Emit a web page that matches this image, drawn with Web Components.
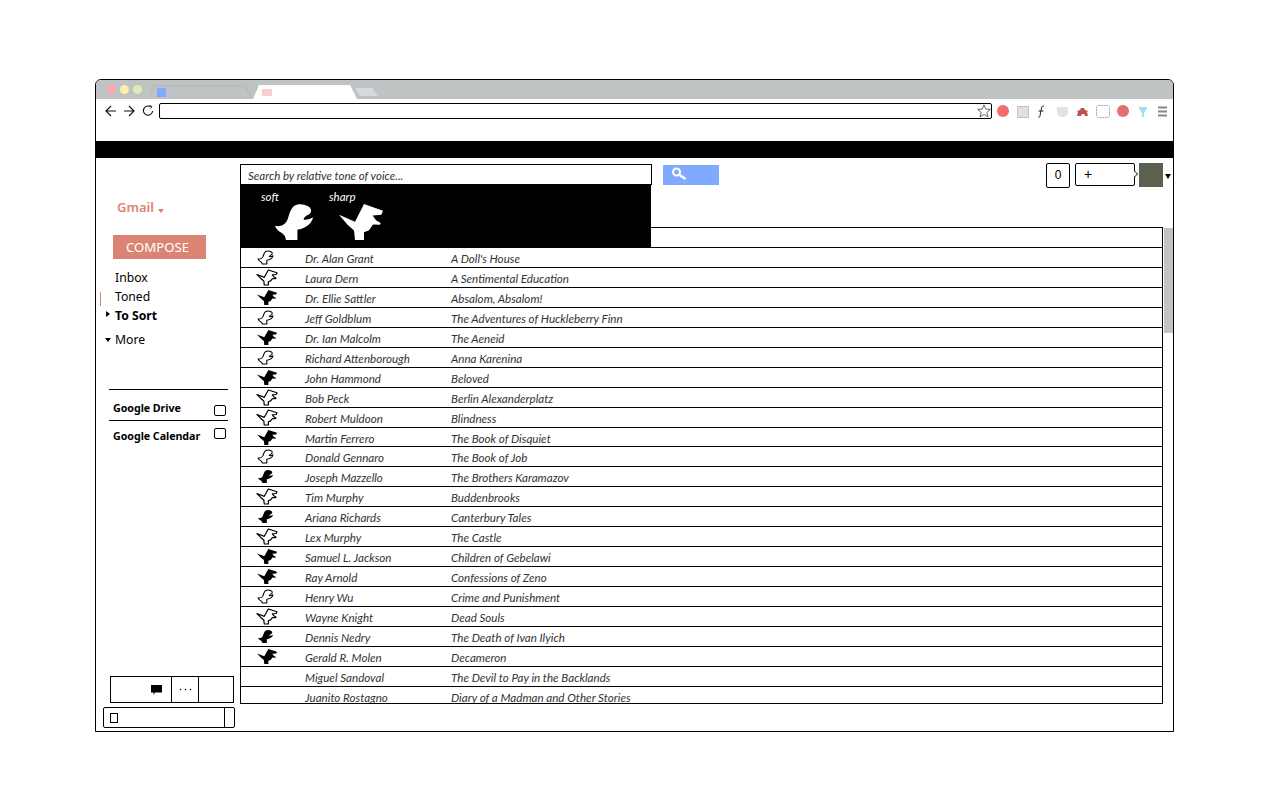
<!DOCTYPE html>
<html>
<head>
<meta charset="utf-8">
<title>Gmail</title>
<style>
  html, body { margin: 0; background: #fff; }
  body { padding: 79px 0 0 95px; font-family: "Open Sans", "Noto Sans", sans-serif; }
</style>
</head>
<body>
<browser-window>
  <gmail-sidebar slot="side"></gmail-sidebar>
  <mail-list slot="main"></mail-list>
</browser-window>

<script>
(function() {
    // traced from the big icons, coordinates are 3x the pixels on screen
    const DINOS = {
        sharp: {
            box: '210 18 132 106',
            d: 'M210 50 L258 70 L285 18 L342 38 L337 50 L311 52 L321 66 L335 74 L333 79 L312 78 L300 95 L285 101 L285 124 L258 124 L255 96 L235 78 Z'
        },
        soft: {
            box: '20 18 112 106',
            d: 'M20 82 C32 86 48 82 56 66 C62 52 64 34 76 24 C88 15 108 18 120 26 C130 34 128 44 118 50 C110 54 106 58 104 64 C112 66 124 62 132 57 C130 72 116 88 86 94 L86 124 L52 124 C52 112 44 106 34 100 C28 96 23 90 20 82 Z'
        }
    };

    class DinoIcon extends HTMLElement {
        connectedCallback() {
            const dino = DINOS[this.getAttribute('kind')] || DINOS.sharp;
            const look = this.getAttribute('look') || 'solid';
            const fill = look === 'line' ? '#fff' : 'currentColor';
            const sw = look === 'line' ? 8 : 0;
            const root = this.attachShadow({ mode: 'open' });
            root.innerHTML = `
                <style>
                  :host { display: block; color: #000; line-height: 0; }
                  svg { display: block; width: 100%; height: 100%; overflow: visible; }
                </style>
                <svg viewBox="${dino.box}" preserveAspectRatio="none"><path d="${dino.d}" fill="${fill}" stroke="currentColor" stroke-width="${sw}" stroke-linejoin="round"/></svg>
            `;
        }
    }
    customElements.define('dino-icon', DinoIcon);

    class BrowserWindow extends HTMLElement {
        constructor() {
            super();
            const root = this.attachShadow({ mode: 'open' });
            root.innerHTML = `
                <style>
                  :host { display: flex; flex-direction: column; box-sizing: border-box; width: 1079px; height: 653px;
                          border: 1px solid #000; border-radius: 6px 6px 0 0; overflow: hidden; }
                  .tabs { height: 19px; box-sizing: border-box; padding-top: 1px; background: #bfc3c3; display: flex; align-items: flex-start; flex: none; position: relative; }
                  .dots { display: flex; gap: 4px; padding: 4px 0 0 11px; width: 39px; }
                  .dots i { width: 9px; height: 9px; border-radius: 50%; flex: none; }
                  .tab { position: relative; flex: none; }
                  .t1 { width: 105px; height: 14px; margin: 4px 0 0 2px; background: #b5b9b9; clip-path: polygon(6px 0, 97px 0, 105px 100%, 0 100%); }
                  .t1:before { content: ""; position: absolute; inset: 1px 1px 0 1px; background: #bfc3c3; clip-path: polygon(6px 0, 95px 0, 103px 100%, 0 100%); }
                  .t1 b { position: absolute; left: 9px; top: 3px; width: 9px; height: 9px; background: #80aaff; }
                  .t2 { width: 104px; height: 14px; margin-top: 4px; background: #fff; clip-path: polygon(6px 0, 97px 0, 104px 100%, 0 100%); }
                  .t2 b { position: absolute; left: 9px; top: 4px; width: 10px; height: 7px; background: #f9cdd0; }
                  .t3 { width: 23px; height: 8px; margin: 7px 0 0 -2px; background: #d7dadc; clip-path: polygon(0 0, 17px 0, 23px 100%, 5px 100%); }
                  .toolbar { height: 42px; flex: none; display: flex; align-items: flex-start; padding: 4px 0 0 9px; box-sizing: border-box; }
                  .nav { display: flex; gap: 6px; align-items: center; height: 16px; margin-right: 5px; }
                  .nav svg { display: block; }
                  .nav svg:last-child { margin-left: 1px; }
                  .addr { box-sizing: border-box; width: 834px; height: 16px; border: 1px solid #000; border-radius: 2px; position: relative; }
                  .addr svg { position: absolute; right: 0; top: 0; }
                  .ext { display: flex; align-items: center; height: 16px; margin-left: 1px; }
                  .black { height: 17px; background: #000; flex: none; }
                  .body { flex: 1; display: flex; min-height: 0; }
                  ::slotted([slot=side]) { width: 144px; flex: none; }
                  ::slotted([slot=main]) { flex: 1; min-width: 0; }
                </style>
                <div class="tabs">
                  <div class="dots"><i style="background:#fda8ad"></i><i style="background:#fdf0a8"></i><i style="background:#d8f0b8"></i></div>
                  <div class="tab t1"><b></b></div>
                  <div class="tab t2"><b></b></div>
                  <div class="tab t3"></div>
                </div>
                <div class="toolbar">
                  <div class="nav">
                    <svg width="12" height="12" viewBox="0 0 12 12" fill="none" stroke="#111" stroke-width="1.1"><path d="M11 6H1M6 1L1 6l5 5"/></svg>
                    <svg width="12" height="12" viewBox="0 0 12 12" fill="none" stroke="#111" stroke-width="1.1"><path d="M1 6h10M6 1l5 5-5 5"/></svg>
                    <svg width="12" height="12" viewBox="0 0 12 12" fill="none" stroke="#111" stroke-width="1.1"><path d="M8.500 1.700A4.600 4.600 0 1 0 10.600 6"/><path d="M7.500 .500l2.500 1-1.500 2" stroke-width=".9"/></svg>
                  </div>
                  <div class="addr">
                    <svg width="14" height="14" viewBox="0 0 14 14" fill="#fff" stroke="#444" stroke-width=".8"><path d="M7 .8l1.8 4.3 4.6.3-3.6 3 1.2 4.5L7 10.4l-4 2.5 1.2-4.5-3.600-3 4.600-.3z"/></svg>
                  </div>
                  <div class="ext">
                    <svg width="180" height="16" viewBox="0 0 180 16">
                      <circle cx="10" cy="8" r="6" fill="#f26c6c"/>
                      <rect x="24.500" y="3.500" width="11" height="11" fill="#e0e0e0" stroke="#c4c4c4"/>
                      <path d="M45 14c2 1 2-1 2.500-4l1-5c.5-2 1.500-2.500 2.500-1.500M45.500 8h5" fill="none" stroke="#222" stroke-width="1"/>
                      <path d="M64 4h11v5c0 3-3 5-5.500 5S64 12 64 9z" fill="#e2e2e2"/>
                      <path d="M84 13l1-4-1-1 3-1 1-2h3l1 2 3 1-1 1 1 4h-3l-1-2h-2l-1 2z" fill="#c0504d"/>
                      <rect x="103.500" y="2.500" width="13" height="12" rx="2" fill="#fff" stroke="#aaa" stroke-dasharray="2 .6"/>
                      <circle cx="130" cy="8" r="6" fill="#e36f6f"/>
                      <path d="M146 4h8c0 2-1.500 4-3 6v4h-2v-4c-1.500-2-3-4-3-6z" fill="#a6dcf8"/>
                      <path d="M165 3.500h9v2h-9zM165 7.500h9v2h-9zM165 11.500h9v2h-9z" fill="#888"/>
                    </svg>
                  </div>
                </div>
                <div class="black"></div>
                <div class="body"><slot name="side"></slot><slot name="main"></slot></div>
            `;
        }
    }
    customElements.define('browser-window', BrowserWindow);

    class GmailSidebar extends HTMLElement {
        constructor() {
            super();
            const root = this.attachShadow({ mode: 'open' });
            root.innerHTML = `
                <style>
                  :host { display: flex; flex-direction: column; color: #000; font-family: "Noto Sans", sans-serif; position: relative; }
                  .gm { margin: 39px 0 0 21px; height: 20px; font-size: 13px; font-weight: 600; color: #dc8474; line-height: 20px; }
                  .gm i { display: inline-block; border: 3.500px solid transparent; border-top: 4px solid #dc8474; border-bottom: 0; margin-left: 1px; vertical-align: -1px; }
                  .compose { box-sizing: border-box; margin: 18px 0 0 17px; width: 93px; height: 24px; padding-right: 4px; background: #dc8474; color: #fff; font-size: 13.200px; line-height: 24px; text-align: center; }
                  .nav { margin: 9px 0 0 19px; font-size: 12.200px; line-height: 19px; position: relative; }
                  .nav div { height: 19px; }
                  .bar { position: absolute; left: -15px; top: 24px; width: 1px; height: 14px; background: #dc8474; }
                  .tri { position: absolute; border-style: solid; border-color: transparent; }
                  .r { left: -9px; top: 43px; border-width: 3.500px 0 3.500px 4px; border-left-color: #000; }
                  .d { left: -10px; top: 70px; border-width: 4px 3.500px 0; border-top-color: #000; }
                  .more { margin-top: 5px; }
                  .apps { margin: 40px 0 0 13px; width: 119px; }
                  .app { box-sizing: border-box; border-top: 1px solid #000; height: 31px; display: flex; justify-content: space-between; padding: 11px 2px 0 4px; font-size: 10.700px; font-weight: 700; line-height: 15px; white-space: nowrap; letter-spacing: -.05px; }
                  .app + .app { height: 28px; padding-top: 8px; }
                  .app span { box-sizing: border-box; flex: none; width: 12px; height: 11px; margin-top: 4px; border: 1px solid #000; border-radius: 2px; }
                  .app + .app span { margin-top: -1px; }
                  .foot { margin: auto 0 0 0; display: flex; flex-direction: column; padding-bottom: 3px; }
                  .chat { box-sizing: border-box; margin-left: 14px; width: 124px; height: 27px; border: 1px solid #000; display: grid; grid-template-columns: 60px 27px 1fr; }
                  .chat > div { display: flex; align-items: center; justify-content: flex-end; box-sizing: border-box; }
                  .chat > div + div { border-left: 1px solid #000; justify-content: center; }
                  .chat svg.bub { margin-right: 9px; }
                  .hang { box-sizing: border-box; margin: 4px 0 0 7px; width: 132px; height: 21px; border: 1px solid #000; border-radius: 2px; display: flex; align-items: center; padding-left: 6px; position: relative; }
                  .hang b { box-sizing: border-box; width: 8px; height: 10px; border: 1px solid #000; }
                  .hang u { position: absolute; right: 9px; top: 0; bottom: 0; width: 1px; background: #000; }
                </style>
                <div class="gm">Gmail <i></i></div>
                <div class="compose">COMPOSE</div>
                <div class="nav">
                  <div>Inbox</div>
                  <div>Toned</div>
                  <div style="font-weight:700">To Sort</div>
                  <div class="more">More</div>
                  <i class="bar"></i><i class="tri r"></i><i class="tri d"></i>
                </div>
                <div class="apps">
                  <div class="app">Google Drive<span></span></div>
                  <div class="app">Google Calendar<span></span></div>
                </div>
                <div class="foot">
                  <div class="chat">
                    <div><svg class="bub" width="11" height="10" viewBox="0 0 11 10"><path d="M0 0h11v7.500H4L2.500 10V7.500H0z" fill="#000"/></svg></div>
                    <div><svg width="13" height="3" viewBox="0 0 13 3" fill="#000"><circle cx="1.500" cy="1.500" r=".8"/><circle cx="6.500" cy="1.500" r=".8"/><circle cx="11.500" cy="1.500" r=".8"/></svg></div>
                    <div></div>
                  </div>
                  <div class="hang"><b></b><u></u></div>
                </div>
            `;
        }
    }
    customElements.define('gmail-sidebar', GmailSidebar);

    const mails = [
        ['soft','line','Dr. Alan Grant',"A Doll's House"],
        ['sharp','line','Laura Dern','A Sentimental Education'],
        ['sharp','solid','Dr. Ellie Sattler','Absalom, Absalom!'],
        ['soft','line','Jeff Goldblum','The Adventures of Huckleberry Finn'],
        ['sharp','solid','Dr. Ian Malcolm','The Aeneid'],
        ['soft','line','Richard Attenborough','Anna Karenina'],
        ['sharp','solid','John Hammond','Beloved'],
        ['sharp','line','Bob Peck','Berlin Alexanderplatz'],
        ['sharp','line','Robert Muldoon','Blindness'],
        ['sharp','solid','Martin Ferrero','The Book of Disquiet'],
        ['soft','line','Donald Gennaro','The Book of Job'],
        ['soft','solid','Joseph Mazzello','The Brothers Karamazov'],
        ['sharp','line','Tim Murphy','Buddenbrooks'],
        ['soft','solid','Ariana Richards','Canterbury Tales'],
        ['sharp','line','Lex Murphy','The Castle'],
        ['sharp','solid','Samuel L. Jackson','Children of Gebelawi'],
        ['sharp','solid','Ray Arnold','Confessions of Zeno'],
        ['soft','line','Henry Wu','Crime and Punishment'],
        ['sharp','line','Wayne Knight','Dead Souls'],
        ['soft','solid','Dennis Nedry','The Death of Ivan Ilyich'],
        ['sharp','solid','Gerald R. Molen','Decameron'],
        ['','','Miguel Sandoval','The Devil to Pay in the Backlands'],
        ['','','Juanito Rostagno','Diary of a Madman and Other Stories']
    ];

    class MailRow extends HTMLElement {
        connectedCallback() {
            const kind = this.getAttribute('kind');
            const root = this.attachShadow({ mode: 'open' });
            root.innerHTML = `
                <style>
                  :host { display: grid; grid-template-columns: 64px 146px 1fr; box-sizing: border-box; height: 19.930px;
                          border-bottom: 1px solid #000; font: italic 11.600px/19px Lato, "Noto Sans", sans-serif; color: #333; white-space: nowrap; }
                  .ic { padding-top: 2px; display: flex; justify-content: center; width: 52px; }
                  .ic .soft { width: 15px; height: 13px; margin: 1px 3px 0 0; }
                  .ic .sharp { width: 20px; height: 15px; }
                  span { padding-top: 1px; }
                </style>
                <div class="ic">${kind ? `<dino-icon class="${kind}" kind="${kind}" look="${this.getAttribute('look')}"></dino-icon>` : ''}</div>
                <span><slot name="from"></slot></span>
                <span><slot name="subject"></slot></span>
            `;
        }
    }
    customElements.define('mail-row', MailRow);

    class MailList extends HTMLElement {
        constructor() {
            super();
            const root = this.attachShadow({ mode: 'open' });
            root.innerHTML = `
                <style>
                  :host { display: flex; flex-direction: column; position: relative; min-height: 0; font-family: Lato, "Noto Sans", sans-serif; }
                  .top { height: 69px; flex: none; display: flex; align-items: flex-start; padding-top: 6px; box-sizing: border-box; }
                  .search { box-sizing: border-box; width: 412px; height: 21px; border: 1px solid #000; font: italic 11.500px/21px Lato, "Noto Sans", sans-serif; color: #333; padding-left: 7px; }
                  .go { width: 56px; height: 20px; background: #80aaff; margin: 1px 0 0 11px; }
                  .go svg { display: block; margin: 2px 0 0 8px; }
                  .right { margin: -1px 0 0 auto; display: flex; align-items: flex-start; padding-right: 2px; }
                  .cnt { box-sizing: border-box; width: 24px; height: 25px; border: 1px solid #000; border-radius: 2px; font: 12px/23px "Liberation Sans", sans-serif; text-align: center; color: #000; }
                  .plus { box-sizing: border-box; width: 60px; height: 23px; margin-left: 5px; border: 1px solid #000; border-radius: 2px; font: 14px/20px "Liberation Sans", sans-serif; padding-left: 8px; color: #000; position: relative; }
                  .plus:after { content: ""; position: absolute; right: -4px; top: 7px; width: 5px; height: 5px; background: #fff; border: solid #000; border-width: 1px 1px 0 0; transform: rotate(45deg) scale(.7); }
                  .av { width: 24px; height: 24px; margin-left: 4px; background: #5a614f; }
                  .tri { width: 0; height: 0; margin: 11px 0 0 2px; border: 3px solid transparent; border-top: 5px solid #000; border-bottom: 0; }
                  .pop { position: absolute; left: 0; top: 26px; width: 411px; height: 64px; background: #000; color: #fff; display: flex; font: italic 11.500px/14px Lato, "Noto Sans", sans-serif; z-index: 1; }
                  .pop div { display: flex; flex-direction: column; }
                  .pop span { display: block; }
                  .tone1 { margin-left: 21px; width: 68px; padding-top: 6px; box-sizing: border-box; }
                  .tone2 { padding-top: 6px; }
                  .pop dino-icon { color: #fff; height: 36px; }
                  .tone1 dino-icon { width: 38px; margin: 0 0 0 14px; }
                  .tone2 dino-icon { width: 44px; margin: 0 0 0 10px; }
                  .wrap { flex: none; height: 477px; display: flex; }
                  .table { box-sizing: border-box; width: 923px; height: 477px; border: 1px solid #000; overflow: hidden; }
                  .head { box-sizing: border-box; height: 20.250px; border-bottom: 1px solid #000; }
                  .sb { margin: 1px 0 0 1px; width: 9px; height: 105px; background: #bfc3c3; }
                </style>
                <div class="top">
                  <div class="search">Search by relative tone of voice...</div>
                  <div class="go"><svg width="16" height="14" viewBox="0 0 16 14" fill="none" stroke="#fff"><circle cx="5.500" cy="5" r="3.500" stroke-width="2"/><path d="M8.500 8l6 4" stroke-width="2.500"/></svg></div>
                  <div class="right">
                    <div class="cnt">0</div>
                    <div class="plus">+</div>
                    <div class="av"></div>
                    <div class="tri"></div>
                  </div>
                </div>
                <div class="pop">
                  <div class="tone1"><span>soft</span><dino-icon kind="soft"></dino-icon></div>
                  <div class="tone2"><span>sharp</span><dino-icon kind="sharp"></dino-icon></div>
                </div>
                <div class="wrap">
                  <div class="table"><div class="head"></div><div id="rows"></div></div>
                  <div class="sb"></div>
                </div>
            `;
            const rows = root.getElementById('rows');
            mails.forEach((m) => {
                const row = document.createElement('mail-row');
                row.setAttribute('kind', m[0]);
                row.setAttribute('look', m[1]);
                const a = document.createElement('span');
                a.slot = 'from';
                a.textContent = m[2];
                const b = document.createElement('span');
                b.slot = 'subject';
                b.textContent = m[3];
                row.append(a, b);
                rows.append(row);
            });
        }
    }
    customElements.define('mail-list', MailList);
})();
</script>
</body>
</html>
